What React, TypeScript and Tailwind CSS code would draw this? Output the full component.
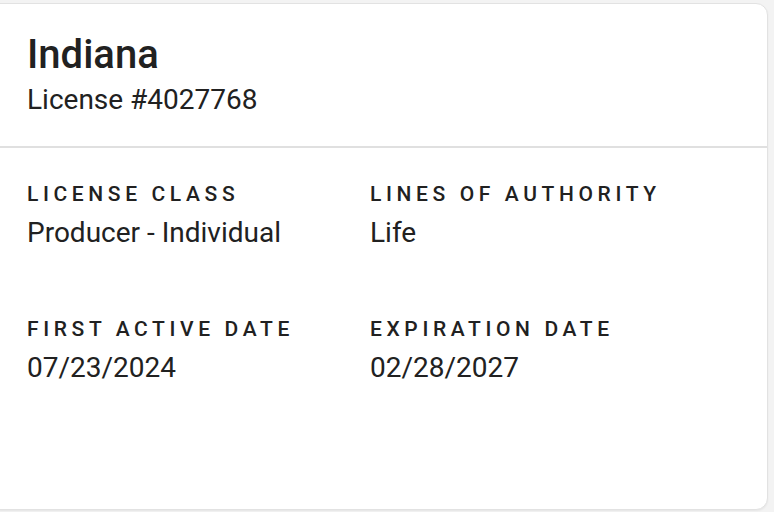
const fields = [
  { label: "LICENSE CLASS", value: "Producer - Individual" },
  { label: "LINES OF AUTHORITY", value: "Life" },
  { label: "FIRST ACTIVE DATE", value: "07/23/2024" },
  { label: "EXPIRATION DATE", value: "02/28/2027" },
];

const App = () => {
  return (
    <div
      className="w-[774px] h-[512px] overflow-hidden bg-[#f3f3f3] pt-[3px] pr-[6px] text-[#212121]"
      style={{ fontFamily: "Roboto, 'Liberation Sans', sans-serif" }}
    >
      <div className="-ml-3 h-[507px] rounded-xl bg-white border border-[#e2e2e2] shadow-[0_1px_2px_rgba(0,0,0,0.06)]">
        <div className="pl-[38px] pt-[28px] pb-[29px] border-b-2 border-[#e0e0e0]">
          <h1 className="text-[40px] leading-[46px] font-medium">Indiana</h1>
          <p className="mt-[5px] text-[28px] leading-[34px]">License #4027768</p>
        </div>

        <div className="pl-[38px] pt-[33px] grid grid-cols-[343px_1fr] gap-y-[66px]">
          {fields.map((field) => (
            <div key={field.label} className="flex flex-col gap-[9px]">
              <span className="text-[21px] leading-[26px] font-medium tracking-[0.22em]">
                {field.label}
              </span>
              <span className="text-[28px] leading-[34px]">{field.value}</span>
            </div>
          ))}
        </div>
      </div>
    </div>
  );
};

export default App;
